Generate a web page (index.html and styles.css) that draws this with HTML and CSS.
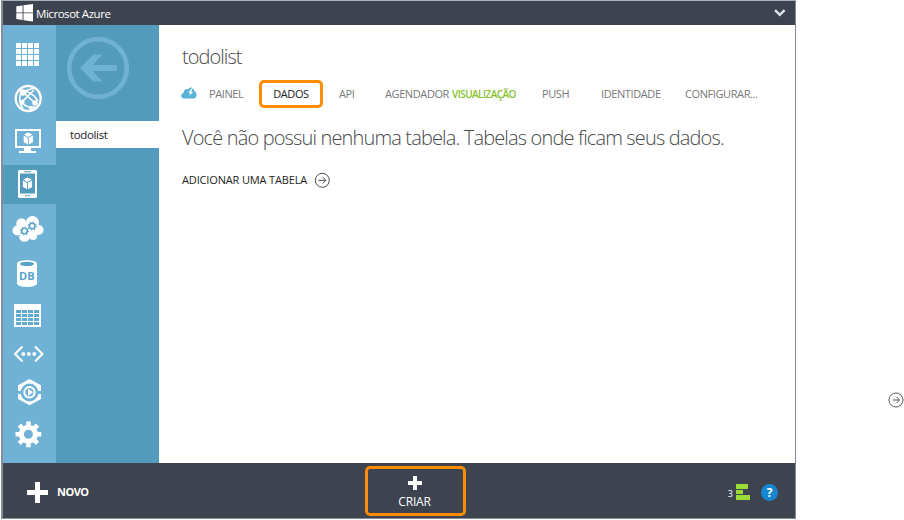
FILE: index.html
```html
<!DOCTYPE html>
<html lang="pt-BR">
<head>
<meta charset="utf-8">
<title>Microsot Azure</title>
<link rel="stylesheet" href="styles.css">
</head>
<body>
<div class="page">
<div class="app">
  <header class="topbar">
    <svg class="logo" width="18" height="18" viewBox="16 5 18 18" fill="#fff"><path d="M16.3 7.2L22.6 6.4V13.4H16.3ZM23.5 6.2L33 5V13.4H23.5ZM16.3 14.3H22.6V21L16.3 20.1ZM23.5 14.3H33V22.4L23.5 21.2Z"/></svg>
    <span class="brand">Microsot Azure</span>
    <svg class="chevron" width="14" height="10" viewBox="0 0 14 10"><path d="M2 2.2L6.8 6.8L11.6 2.2" fill="none" stroke="#dfe2e5" stroke-width="2.5"/></svg>
  </header>
  <div class="middle">
    <nav class="rail">
      <a class="item all"><svg width="53" height="42" viewBox="3 34 53 42"><path d="M16 45.5H39M16 51.5H39M16 57.5H39M16 63.5H39" fill="none" stroke="#fff" stroke-width="5" stroke-dasharray="5 1"/></svg></a>
      <a class="item web"><svg width="53" height="44" viewBox="3 76 53 44"><g fill="none" stroke="#fff"><circle cx="28.2" cy="98.5" r="12.5" stroke-width="2.3"/><path d="M22 92C27 90 34 94 38 101M22 92C18 97 20 104 23 109M22 102L34 90M23 92L35 103M22 103C26 107 31 108 36 107M34 88L25 91" stroke-width="1.6"/></g><g fill="#fff"><circle cx="23" cy="92.500" r="3.300"/><circle cx="35" cy="103" r="2.700"/><circle cx="22" cy="102" r="2.500"/><circle cx="31" cy="108" r="2"/></g></svg></a>
      <a class="item vm"><svg width="53" height="42" viewBox="3 120 53 42"><path d="M16 130H40V147H16Z" fill="none" stroke="#fff" stroke-width="2"/><path d="M24 148H31V151H36V153H19V151H24Z" fill="#fff"/><path d="M28.3 132.5L32.5 134.6L28.3 136.9L24.1 134.6ZM23.7 135.5L27.9 137.8V144.5L23.7 142.3ZM32.9 135.5L28.8 137.8V144.5L32.9 142.3Z" fill="#fff"/></svg></a>
      <a class="item mobile active"><svg width="53" height="39" viewBox="3 165 53 39"><path fill="#fff" fill-rule="evenodd" d="M19.5 170H35.500Q37 170 37 171.500V196.500Q37 198 35.500 198H19.500Q18 198 18 196.500V171.500Q18 170 19.500 170ZM20 173.500V193.500H35V173.500ZM24 171.300V172.200H31V171.300ZM25 195.300V196.300H30V195.300Z"/><path d="M27.500 177.500L31.800 179.600L27.500 181.900L23.200 179.600ZM22.900 180.500L27.100 182.700V189.300L22.900 187.100ZM32.100 180.500L28 182.700V189.300L32.100 187.100Z" fill="#fff"/></svg></a>
      <a class="item cloud"><svg width="53" height="44" viewBox="3 207 53 44"><g fill="#fff"><circle cx="17.500" cy="230.500" r="5"/><circle cx="21.500" cy="223.500" r="5.200"/><circle cx="32.500" cy="222.500" r="6.500"/><circle cx="38.500" cy="230" r="5"/><circle cx="24.500" cy="236.500" r="5.300"/><circle cx="33" cy="236" r="4"/><path d="M18 224H38V235H18Z"/></g><g fill="none" stroke="#56a3c7"><circle cx="24.500" cy="231" r="2.800" stroke-width="1.500"/><circle cx="24.500" cy="231" r="4" stroke-width="1.200" stroke-dasharray="1.200 1.942"/><circle cx="32.200" cy="226" r="2.800" stroke-width="1.500"/><circle cx="32.200" cy="226" r="4" stroke-width="1.200" stroke-dasharray="1.200 1.942"/></g></svg></a>
      <a class="item db"><svg width="53" height="46" viewBox="3 251 53 46"><path d="M17 263.500C17 259 37 259 37 263.500V283.500C37 288 17 288 17 283.500Z" fill="#fff"/><ellipse cx="27" cy="263.900" rx="7" ry="2.200" fill="#56a3c7"/><text x="26.800" y="280" text-anchor="middle" class="db-text">DB</text></svg></a>
      <a class="item table"><svg width="53" height="38" viewBox="3 297 53 38"><path d="M14 304H41V327H14Z" fill="#fff"/><path d="M16 311.500H39M16 315.500H39M16 319.500H39M16 323.500H39" fill="none" stroke="#62a9ce" stroke-width="3" stroke-dasharray="5 1"/></svg></a>
      <a class="item code"><svg width="53" height="38" viewBox="3 335 53 38"><path d="M22.500 346.500L15 354L22.500 361.500M35 346.500L42.500 354L35 361.500" fill="none" stroke="#fff" stroke-width="2"/><g fill="#fff"><circle cx="23.300" cy="354" r="1.900"/><circle cx="28.800" cy="354" r="1.900"/><circle cx="34.300" cy="354" r="1.900"/></g></svg></a>
      <a class="item media"><svg width="53" height="38" viewBox="3 373 53 38"><g fill="#fff"><path d="M29.500 379L41 385.200V391H38.200A8.800 8.800 0 0 0 20.800 391H18V385.200ZM29.500 405.300L41 399V394H38.200A8.800 8.800 0 0 1 20.800 394H18V399Z"/></g><circle cx="29.500" cy="392.300" r="5.200" fill="none" stroke="#fff" stroke-width="2"/><path d="M28 388.600L33 392.300L28 396Z" fill="#fff"/></svg></a>
      <a class="item gear"><svg width="53" height="47" viewBox="3 411 53 47"><circle cx="28.400" cy="434.300" r="7" fill="none" stroke="#fff" stroke-width="5"/><g stroke="#fff" stroke-width="4.500"><path d="M28.400 421.500V427M28.400 441.600V447.200M15.500 434.300H21M35.700 434.300H41.300M19.300 425.200L23.200 429.100M33.500 439.400L37.500 443.400M37.500 425.200L33.500 429.100M23.200 439.400L19.300 443.400"/></g></svg></a>
    </nav>
    <aside class="sidebar">
      <svg class="back" width="62" height="62" viewBox="66 37 62 62"><circle cx="97" cy="68" r="28.800" fill="none" stroke="#70b2d5" stroke-width="4.500"/><path d="M79 68L92.500 54.500H101.700L91.500 65H115.700V71H91.500L101.700 81.500H92.500Z" fill="#70b2d5"/></svg>
      <a class="selected">todolist</a>
    </aside>
    <main class="content">
      <h1>todolist</h1>
      <nav class="tabs">
        <svg class="quick" width="16" height="12" viewBox="0 0 16 12"><path d="M3 11.500C-.8 11.500-.4 6 2.600 6C2.500 2.500 5.500 1.300 7.300 2.500C9-1 13.500.5 13 4C16.500 5 16.400 11.500 12.500 11.500Z" fill="#57b2d8"/><path d="M11 1L7.300 6H9.500L8.200 9L12.200 5H10.200L12 1Z" fill="#fff"/></svg>
        <a class="t-painel">PAINEL</a>
        <a class="t-dados">DADOS</a>
        <a class="t-api">API</a>
        <a class="t-agendador">AGENDADOR</a><b class="preview">VISUALIZAÇÃO</b>
        <a class="t-push">PUSH</a>
        <a class="t-identidade">IDENTIDADE</a>
        <a class="t-configurar">CONFIGURAR...</a>
      </nav>
      <p class="message">Você não possui nenhuma tabela. Tabelas onde ficam seus dados.</p>
      <a class="add"><span>ADICIONAR UMA TABELA</span><svg width="16" height="16" viewBox="0 0 16 16" fill="none" stroke="#4a4a4a"><circle cx="8.300" cy="8.300" r="7"/><path d="M4.300 8.300H11.800M8.600 5L11.900 8.300L8.600 11.600"/></svg></a>
    </main>
  </div>
  <footer class="bottombar">
    <svg class="plus" width="21" height="21" viewBox="0 0 21 21"><path d="M8 0H13V8H21V13H13V21H8V13H0V8H8Z" fill="#fff"/></svg>
    <b class="novo">NOVO</b>
    <a class="create">
      <svg width="14" height="14" viewBox="0 0 14 14"><path d="M5 0H9V5H14V9H9V14H5V9H0V5H5Z" fill="#fff"/></svg>
      <span>CRIAR</span>
    </a>
    <span class="count">3</span>
    <svg class="bars" width="14" height="16" viewBox="0 0 14 16" fill="#98dc35"><path d="M0 0H12V5H0ZM0 6H7V10H0ZM0 11H14V16H0Z"/></svg>
    <span class="help">?</span>
  </footer>
</div>
<svg class="outer-arrow" width="16" height="16" viewBox="0 0 16 16" fill="none" stroke="#5a5a5a"><circle cx="8" cy="8" r="7"/><path d="M4.500 8H11.500M8.300 4.700L11.600 8L8.300 11.300"/></svg>
</div>
</body>
</html>
```
FILE: styles.css
```css
* { box-sizing: border-box; }
body { margin: 0; background: #fff; font-family: "Open Sans", sans-serif; overflow: hidden; }
svg { display: block; flex: none; }
.page { display: flex; width: 904px; height: 520px; overflow: hidden; }
.app {
  flex: none; width: 795px; height: 519px; margin-left: 1px;
  display: grid; grid-template-rows: 24px 438px 55px;
  border: 1px solid #858e98; border-left-width: 2px; border-top-color: #a9b2b8;
}
.topbar { display: flex; align-items: center; background: #3e444f; color: #fff; padding-left: 13px; padding-right: 8px; }
.brand { margin-left: 2px; padding-top: 2px; font-size: 11.5px; line-height: 16px; letter-spacing: -.45px; white-space: nowrap; }
.chevron { margin-left: auto; }
.middle { display: grid; grid-template-columns: 53px 103px 1fr; }
.rail { background: #70b2d5; padding-top: 9px; }
.item { display: block; }
.active { background: #529bbc; margin: 3px 0; }
.db-text { font: 700 11px "Open Sans", sans-serif; fill: #56a3c7; }
.sidebar { background: #529bbc; }
.back { margin: 12px 0 0 10.500px; }
.selected { display: block; height: 27px; margin-top: 22px; padding-left: 14px; background: #fff; color: #222; font-size: 11.5px; line-height: 27px; letter-spacing: -.35px; }
.content { padding-left: 23px; color: #484848; white-space: nowrap; }
h1 { margin: 18px 0 0; font-size: 20px; font-weight: 300; line-height: 28px; letter-spacing: -.95px; }
.tabs { display: flex; align-items: center; height: 28px; margin-top: 9px; margin-left: -1px; font-size: 11px; line-height: 15px; color: #777; letter-spacing: -.4px; }
.tabs > a, .preview { padding-bottom: 2px; }
.tabs > .t-dados { display: flex; align-items: center; justify-content: center; width: 64px; height: 28px; margin-left: 16px; padding-bottom: 1px; border: 3px solid #ff8c00; border-radius: 5px; color: #222; }
.quick { margin-bottom: 2px; }
.t-painel { width: 34px; margin-left: 12px; }
.t-api { width: 16px; margin-left: 16px; }
.t-agendador { width: 64px; margin-left: 30px; }
.preview { width: 65px; margin-left: 3px; padding-bottom: 0; font-size: 10px; font-weight: 600; letter-spacing: -.55px; color: #86bf2c; }
.t-push { width: 27px; margin-left: 25px; }
.t-identidade { width: 60px; margin-left: 32px; }
.t-configurar { margin-left: 24px; }
.message { margin: 15px 0 0; font-size: 20px; font-weight: 300; line-height: 30px; letter-spacing: -.85px; }
.add { display: flex; align-items: center; height: 16px; margin-top: 19px; font-size: 11px; letter-spacing: -.15px; color: #222; }
.add span { width: 132px; padding-bottom: 2px; }
.bottombar { display: flex; align-items: center; background: #3e444f; color: #fff; padding: 3px 17px 0 24px; }
.novo { width: 36px; margin-left: 9px; padding-bottom: 2px; font-size: 11px; font-weight: 700; letter-spacing: -.5px; }
.create { display: flex; flex-direction: column; align-items: center; width: 101px; height: 50px; margin: -3px 0 0 272px; padding: 7px 2px 0 0; border: 3px solid #ff8c00; border-radius: 5px; font-size: 12px; letter-spacing: -.2px; line-height: 16px; }
.create span { margin-top: 4px; }
.count { margin-left: auto; font-size: 9px; line-height: 12px; padding-top: 3px; }
.bars { margin-left: 3px; }
.help { width: 17px; height: 17px; margin-left: 11px; border-radius: 50%; background: #1486d2; font-size: 12px; font-weight: 700; line-height: 17px; text-align: center; }
.outer-arrow { margin: 392px 0 0 92px; }
```
